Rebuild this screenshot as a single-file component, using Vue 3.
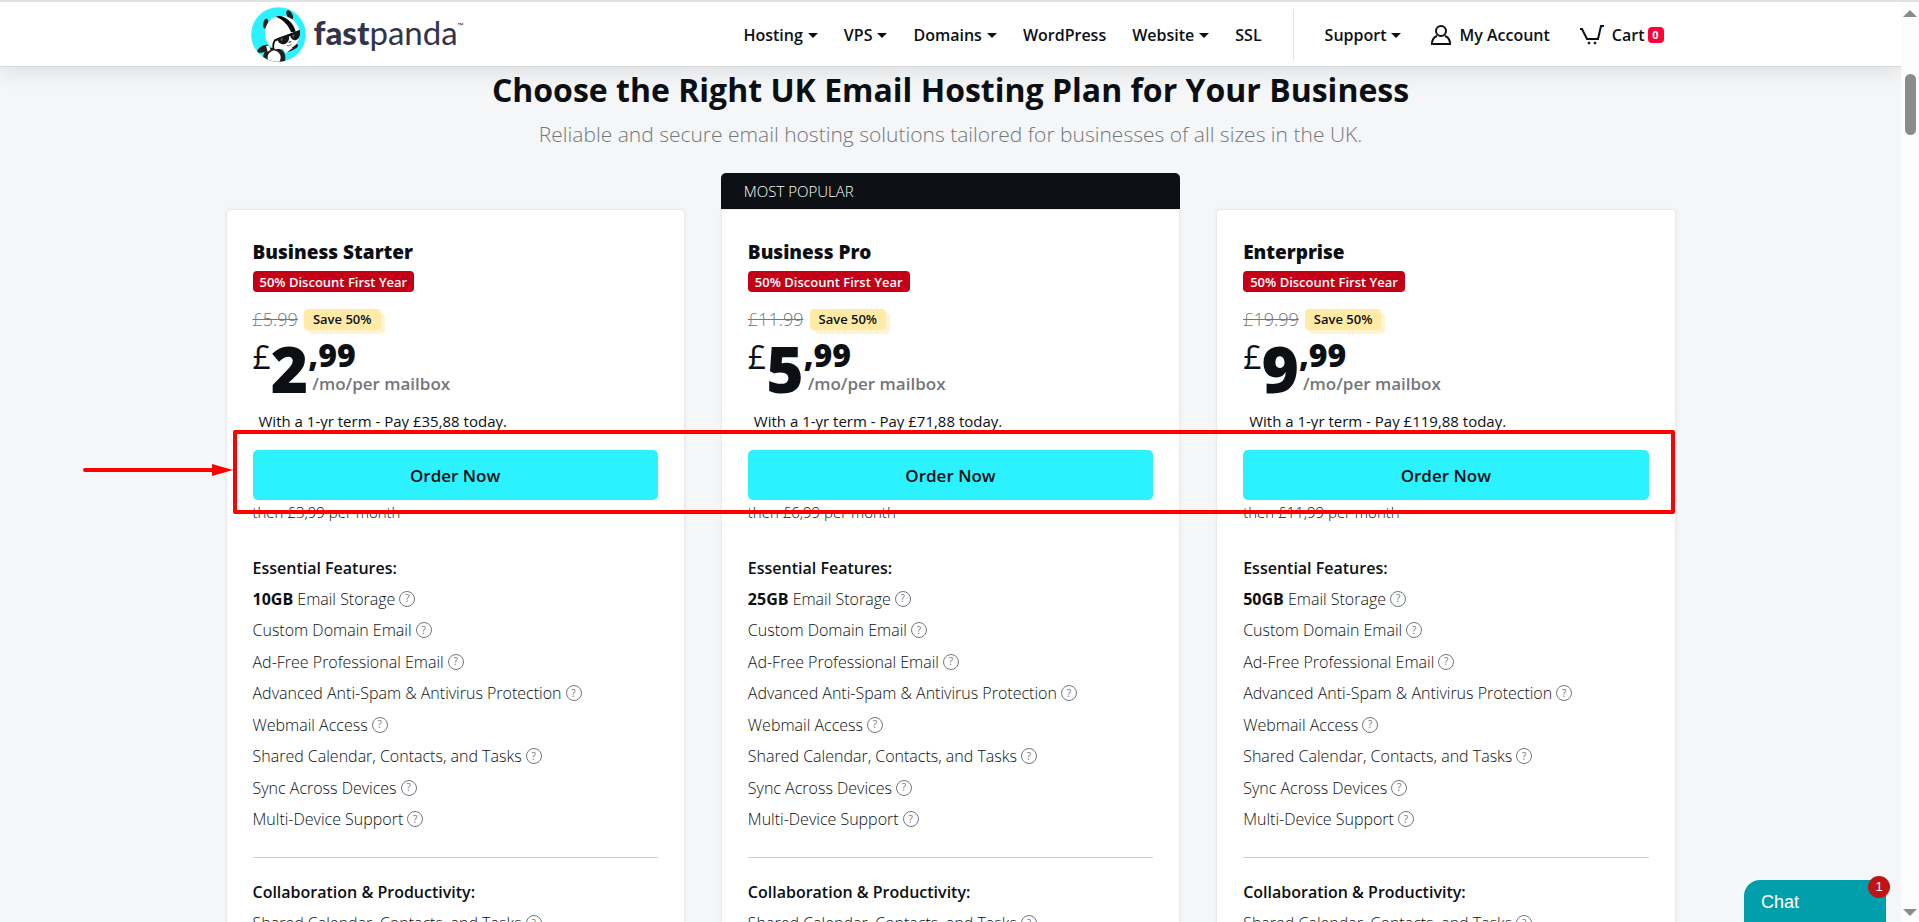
<template>
  <div class="window">
    <div class="top-strip"></div>
    <div class="viewport">
      <div class="page">
        <header class="header">
          <div class="header-inner">
            <a href="#" class="logo" aria-label="fastpanda">
              <svg class="logo-mark" viewBox="63 23 165 165" aria-hidden="true">
                <defs>
                  <clipPath id="disc"><circle cx="145.500" cy="105.500" r="82" /></clipPath>
                </defs>
                <circle cx="145.500" cy="105.500" r="82" fill="#2cf2ff" />
                <g clip-path="url(#disc)">
                  <ellipse cx="107" cy="73" rx="7" ry="15" fill="#231f20" transform="rotate(10 107 73)" />
                  <ellipse cx="179" cy="47" rx="8" ry="15" fill="#231f20" transform="rotate(-28 179 47)" />
                  <path d="M81 158c1-11 17-23 31-22l8 11c-8 9-27 18-39 11z" fill="#231f20" />
                  <path d="M168 158c6-12 18-21 31-24 8 1 6 9-1 13-9 6-21 12-30 11z" fill="#231f20" />
                  <path d="M101 190c-6-24 4-44 30-46 27 1 42 21 32 46z" fill="#231f20" />
                  <path d="M117 190c-8-15-5-30 14-37 21 5 26 20 16 37z" fill="#fff" />
                  <path d="M105 104c-1-33 21-54 49-54 30 0 54 22 55 52 0 30-19 48-44 48-13 0-19-3-27 0-19-5-32-22-33-46z" fill="#fff" />
                  <path d="M137 52c9-3 18-2 25 2 19 10 32 26 35 43l-14 2c-7-21-22-37-46-47z" fill="#090909" />
                  <path d="M128 149c-3-10 0-22 6-29l75-28 1 7-74 27c-4 6-4 15-3 24z" fill="#090909" />
                  <path d="M142 117l34-12c5 15-2 29-16 30-10 0-17-7-18-18zM179 104l30-11c3 12 0 25-10 29-10 3-18-5-20-18z" fill="#161616" />
                  <path d="M151 119l9-4-5 12zM186 108l9-4-5 12z" fill="#5c5c5c" />
                  <path d="M176 128l7-2-4 5zM170 139q10 3 15-5" fill="none" stroke="#231f20" stroke-width="2" />
                  <path d="M160 151l20-11 8 6-21 16z" fill="#fff" />
                  <path d="M108 139l9 1 5 11-9 6z" fill="#fff" />
                </g>
              </svg>
              <span class="logo-text"><b>fast</b>panda<sup>™</sup></span>
            </a>
            <nav class="nav">
              <a v-for="item in menu" :key="item.label" href="#" class="nav-link">
                {{ item.label }}<i v-if="item.drop" class="caret"></i>
              </a>
              <span class="nav-divider"></span>
              <a href="#" class="nav-link">Support<i class="caret"></i></a>
              <a href="#" class="nav-link account">
                <svg class="icon-user" viewBox="0 0 20 20" fill="none" stroke="#0c1014" stroke-width="2">
                  <ellipse cx="10" cy="6" rx="5" ry="5" />
                  <path d="M6 11C3 12 1 15 1 19h18c0-4-2-7-5-8" />
                </svg>
                My Account
              </a>
              <a href="#" class="nav-link cart">
                <svg class="icon-cart" viewBox="0 0 24 20" fill="none" stroke="#0c1014" stroke-width="2">
                  <path d="M0 4h2l5 10h11l3-13h3" />
                  <circle cx="9" cy="18" r="1" fill="#0c1014" stroke-width="1" />
                  <circle cx="15" cy="18" r="1" fill="#0c1014" stroke-width="1" />
                </svg>
                Cart<span class="cart-count">0</span>
              </a>
            </nav>
          </div>
        </header>

        <main class="main">
          <h1 class="title">Choose the Right UK Email Hosting Plan for Your Business</h1>
          <p class="subtitle">Reliable and secure email hosting solutions tailored for businesses of all sizes in the UK.</p>

          <div class="plans">
            <section v-for="plan in plans" :key="plan.name" class="plan">
              <div :class="['ribbon', { 'ribbon-on': plan.popular }]">{{ plan.popular ? 'MOST POPULAR' : '' }}</div>
              <div class="card">
                <h2 class="plan-name">{{ plan.name }}</h2>
                <span class="discount">50% Discount First Year</span>
                <div class="old-row">
                  <s class="old-price">{{ plan.old }}</s>
                  <span class="save">Save 50%</span>
                </div>
                <div class="price">
                  <span class="currency">£</span>
                  <span class="whole">{{ plan.whole }}</span>
                  <span class="price-side">
                    <span class="cents">,99</span>
                    <span class="period">/mo/per mailbox</span>
                  </span>
                </div>
                <p class="term">With a 1-yr term - Pay {{ plan.today }} today.</p>
                <button type="button" class="order">Order Now</button>
                <p class="then">then {{ plan.then }} per month</p>

                <h3 class="group">Essential Features:</h3>
                <ul class="features">
                  <li><span><b>{{ plan.storage }}</b> Email Storage</span><button type="button" class="help">?</button></li>
                  <li v-for="f in features" :key="f"><span>{{ f }}</span><button type="button" class="help">?</button></li>
                </ul>
                <hr class="line" />
                <h3 class="group">Collaboration &amp; Productivity:</h3>
                <ul class="extras">
                  <li v-for="f in extras" :key="f"><span>{{ f }}</span><button type="button" class="help">?</button></li>
                </ul>
              </div>
            </section>

            <!-- red marker round the order buttons -->
            <div class="marker"></div>
            <svg class="arrow" viewBox="0 0 150 14" aria-hidden="true">
              <path d="M2 7h130" stroke="#f00" stroke-width="4" stroke-linecap="round" />
              <path d="M129 1l21 6-21 6z" fill="#f00" />
            </svg>
          </div>
        </main>

        <button type="button" class="chat">Chat<span class="chat-count">1</span></button>
      </div>

      <div class="scrollbar">
        <i class="arrow-up"></i>
        <i class="thumb"></i>
        <i class="arrow-down"></i>
      </div>
    </div>
  </div>
</template>

<script setup>
const menu = [
  { label: 'Hosting', drop: true },
  { label: 'VPS', drop: true },
  { label: 'Domains', drop: true },
  { label: 'WordPress', drop: false },
  { label: 'Website', drop: true },
  { label: 'SSL', drop: false }
]

const plans = [
  { name: 'Business Starter', old: '£5.99', whole: '2', today: '£35,88', then: '£3,99', storage: '10GB', popular: false },
  { name: 'Business Pro', old: '£11.99', whole: '5', today: '£71,88', then: '£6,99', storage: '25GB', popular: true },
  { name: 'Enterprise', old: '£19.99', whole: '9', today: '£119,88', then: '£11,99', storage: '50GB', popular: false }
]

const features = [
  'Custom Domain Email',
  'Ad-Free Professional Email',
  'Advanced Anti-Spam & Antivirus Protection',
  'Webmail Access',
  'Shared Calendar, Contacts, and Tasks',
  'Sync Across Devices',
  'Multi-Device Support'
]

const extras = ['Shared Calendar, Contacts, and Tasks']
</script>

<style>
body {
  margin: 0;
}
</style>

<style scoped>
.window {
  display: flex;
  flex-direction: column;
  height: 100vh;
  overflow: hidden;
  font-family: "Open Sans", "Noto Sans", sans-serif;
  color: #0c1014;
}
.window * {
  box-sizing: border-box;
}
.top-strip {
  flex: none;
  height: 2px;
  background: #e1e1e1;
}
.viewport {
  flex: 1;
  display: flex;
  min-height: 0;
}
.page {
  position: relative;
  flex: 1;
  min-width: 0;
  overflow: hidden;
  background: #f4f6f8;
}

/* header */
.header {
  position: relative;
  z-index: 2;
  background: #fff;
  border-bottom: 1px solid #d9dadc;
  box-shadow: 0 8px 18px rgba(0, 0, 0, 0.08);
}
.header-inner {
  display: flex;
  align-items: center;
  justify-content: space-between;
  max-width: 1450px;
  height: 64px;
  margin: 0 auto;
  padding: 0 12px 0 25px;
}
.logo {
  display: flex;
  align-items: center;
  gap: 8px;
  color: #33334a;
  text-decoration: none;
}
.logo-mark {
  width: 55px;
  height: 55px;
}
.logo-text {
  font-family: Lato, sans-serif;
  font-size: 33px;
  line-height: 40px;
  padding-bottom: 4px;
}
.logo-text b {
  font-weight: 900;
}
.logo-text sup {
  font-size: 8px;
  line-height: 8px;
  vertical-align: 16px;
}
.nav {
  display: flex;
  align-items: center;
  gap: 26px;
  padding-top: 2px;
}
.nav-link {
  display: flex;
  align-items: center;
  font-size: 16px;
  font-weight: 600;
  line-height: 24px;
  color: #0c1014;
  text-decoration: none;
}
.caret {
  margin-left: 5px;
  border-top: 5px solid #0c1014;
  border-left: 5px solid transparent;
  border-right: 5px solid transparent;
}
.nav-divider {
  width: 1px;
  height: 52px;
  margin: 0 5px;
  background: #dfe1e4;
}
.account,
.cart {
  gap: 8px;
  margin-left: 4px;
}
.icon-user {
  width: 20px;
  height: 20px;
}
.icon-cart {
  width: 24px;
  height: 20px;
}
.cart-count {
  width: 16px;
  height: 16px;
  margin-left: -5px;
  border-radius: 4px;
  background: #ff0039;
  color: #fff;
  font-size: 11px;
  font-weight: 700;
  line-height: 16px;
  text-align: center;
}

/* headline */
.main {
  max-width: 1450px;
  margin: 0 auto;
}
.title {
  margin: 0;
  font-size: 32px;
  font-weight: 700;
  line-height: 46px;
  text-align: center;
}
.subtitle {
  margin: 4px 0 22px;
  color: #73777c;
  font-size: 21px;
  font-weight: 300;
  line-height: 34px;
  text-align: center;
}

/* plans */
.plans {
  position: relative;
  display: grid;
  grid-template-columns: repeat(3, 1fr);
  gap: 36px;
}
.ribbon {
  height: 36px;
  padding: 0 23px;
  color: #fff;
  font-size: 15px;
  font-weight: 300;
  line-height: 36px;
}
.ribbon-on {
  border-radius: 5px 5px 0 0;
  background: #0c1014;
}
.card {
  padding: 29px 26px;
  border: 1px solid #e8eaed;
  border-radius: 4px;
  background: #fff;
  box-shadow: 0 0 4px rgba(0, 0, 0, 0.04);
}
.plan-name {
  margin: 0;
  font-size: 19px;
  font-weight: 800;
  line-height: 26px;
}
.discount {
  display: block;
  width: fit-content;
  height: 21px;
  margin-top: 6px;
  padding: 0 7px;
  border-radius: 4px;
  background: #c40016;
  color: #fff;
  font-size: 13px;
  font-weight: 600;
  line-height: 22px;
}
.old-row {
  display: flex;
  align-items: center;
  gap: 6px;
  margin-top: 17px;
}
.old-price {
  color: #73777c;
  font-size: 18px;
  font-weight: 300;
  line-height: 21px;
}
.save {
  padding: 0 9px;
  border-radius: 4px;
  background: #ffeba6;
  box-shadow: 4px 4px 0 #fff5d3;
  font-size: 13px;
  font-weight: 600;
  line-height: 21px;
}
.price {
  display: flex;
  align-items: flex-start;
  margin-top: 9px;
  height: 62px;
}
.currency {
  font-size: 32px;
  line-height: 36px;
}
.whole {
  font-size: 64px;
  font-weight: 800;
  line-height: 60px;
}
.price-side {
  display: flex;
  flex-direction: column;
}
.cents {
  font-size: 32px;
  font-weight: 800;
  line-height: 32px;
}
.period {
  padding-left: 4px;
  color: #73777c;
  font-size: 17px;
  font-weight: 600;
  line-height: 26px;
}
.term {
  margin: 9px 0 18px;
  padding-left: 6px;
  font-size: 15px;
  line-height: 22px;
}
.order {
  display: block;
  width: 100%;
  height: 50px;
  border: 0;
  border-radius: 5px;
  background: #2cf2ff;
  color: #0c1014;
  font-family: inherit;
  font-size: 17px;
  font-weight: 600;
}
.then {
  margin: 1px 0 32px;
  font-size: 15px;
  font-weight: 300;
  line-height: 22px;
}
.group {
  margin: 0;
  font-size: 16px;
  font-weight: 600;
  line-height: 26px;
}
.features,
.extras {
  display: grid;
  grid-auto-rows: 1fr;
  margin: 0;
  padding: 0;
  list-style: none;
  font-size: 16px;
  font-weight: 300;
}
.features {
  min-height: 252px;
  margin-top: 2px;
}
.extras {
  min-height: 32px;
  margin-top: 2px;
}
.features li,
.extras li {
  display: flex;
  align-items: center;
  gap: 4px;
}
.features b {
  font-weight: 700;
}
.help {
  width: 16px;
  height: 16px;
  padding: 0;
  border: 1px solid #73777c;
  border-radius: 50%;
  background: none;
  color: #73777c;
  font-family: inherit;
  font-size: 10px;
  line-height: 13px;
}
.line {
  margin: 22px 0 21px;
  border: 0;
  border-top: 1px solid #cfd1d4;
}

/* marker */
.marker {
  position: absolute;
  top: 257px;
  left: 7px;
  right: 1px;
  height: 84px;
  border: 4px solid #f00;
  border-radius: 2px;
}
.arrow {
  position: absolute;
  top: 290px;
  left: -143px;
  width: 150px;
  height: 14px;
}

/* chat */
.chat {
  position: absolute;
  right: 15px;
  bottom: 0;
  width: 142px;
  height: 42px;
  padding: 2px 17px 0;
  border: 0;
  border-radius: 16px 0 0 0;
  background: #009fab;
  color: #fff;
  font-family: "Liberation Sans", Arial, sans-serif;
  font-size: 18px;
  text-align: left;
}
.chat-count {
  position: absolute;
  top: -4px;
  right: -4px;
  width: 22px;
  height: 22px;
  border-radius: 50%;
  background: #c01313;
  font-size: 13px;
  line-height: 22px;
  text-align: center;
}

/* scrollbar */
.scrollbar {
  flex: none;
  display: flex;
  flex-direction: column;
  align-items: center;
  width: 18px;
  padding: 8px 0 6px;
  background: #fcfcfc;
}
.arrow-up {
  border-bottom: 7px solid #8b8b8b;
  border-left: 7px solid transparent;
  border-right: 7px solid transparent;
}
.arrow-down {
  margin-top: auto;
  border-top: 7px solid #8b8b8b;
  border-left: 7px solid transparent;
  border-right: 7px solid transparent;
}
.thumb {
  width: 11px;
  height: 61px;
  margin-top: 57px;
  border-radius: 6px;
  background: #8b8b8b;
}
</style>
